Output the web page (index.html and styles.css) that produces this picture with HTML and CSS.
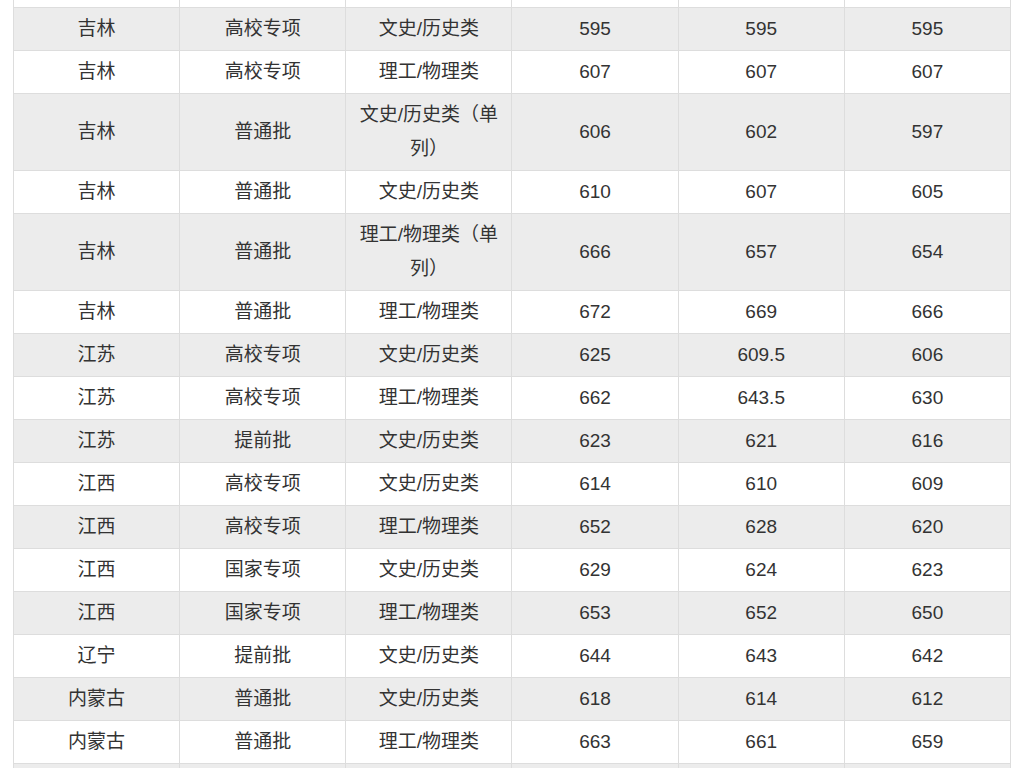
FILE: index.html
```html
<!DOCTYPE html>
<html lang="zh-CN">
<head>
<meta charset="utf-8">
<title>分数线</title>
<link rel="stylesheet" href="styles.css">
</head>
<body>
<div class="page">
<table class="scores">
<tbody>
<tr class="filler"><td></td><td></td><td></td><td></td><td></td><td></td></tr>
<tr><td>吉林</td><td>高校专项</td><td>文史/历史类</td><td>595</td><td>595</td><td>595</td></tr>
<tr><td>吉林</td><td>高校专项</td><td>理工/物理类</td><td>607</td><td>607</td><td>607</td></tr>
<tr><td>吉林</td><td>普通批</td><td>文史/历史类（单列）</td><td>606</td><td>602</td><td>597</td></tr>
<tr><td>吉林</td><td>普通批</td><td>文史/历史类</td><td>610</td><td>607</td><td>605</td></tr>
<tr><td>吉林</td><td>普通批</td><td>理工/物理类（单列）</td><td>666</td><td>657</td><td>654</td></tr>
<tr><td>吉林</td><td>普通批</td><td>理工/物理类</td><td>672</td><td>669</td><td>666</td></tr>
<tr><td>江苏</td><td>高校专项</td><td>文史/历史类</td><td>625</td><td>609.5</td><td>606</td></tr>
<tr><td>江苏</td><td>高校专项</td><td>理工/物理类</td><td>662</td><td>643.5</td><td>630</td></tr>
<tr><td>江苏</td><td>提前批</td><td>文史/历史类</td><td>623</td><td>621</td><td>616</td></tr>
<tr><td>江西</td><td>高校专项</td><td>文史/历史类</td><td>614</td><td>610</td><td>609</td></tr>
<tr><td>江西</td><td>高校专项</td><td>理工/物理类</td><td>652</td><td>628</td><td>620</td></tr>
<tr><td>江西</td><td>国家专项</td><td>文史/历史类</td><td>629</td><td>624</td><td>623</td></tr>
<tr><td>江西</td><td>国家专项</td><td>理工/物理类</td><td>653</td><td>652</td><td>650</td></tr>
<tr><td>辽宁</td><td>提前批</td><td>文史/历史类</td><td>644</td><td>643</td><td>642</td></tr>
<tr><td>内蒙古</td><td>普通批</td><td>文史/历史类</td><td>618</td><td>614</td><td>612</td></tr>
<tr><td>内蒙古</td><td>普通批</td><td>理工/物理类</td><td>663</td><td>661</td><td>659</td></tr>
<tr class="filler"><td></td><td></td><td></td><td></td><td></td><td></td></tr>
</tbody>
</table>
</div>
</body>
</html>
```

FILE: styles.css
```css
html, body {
  margin: 0;
  padding: 0;
  background: #ffffff;
}

body {
  height: 768px;
  overflow: hidden;
}

.page {
  padding-left: 13px;
}

.scores {
  width: 998px;
  margin-top: -36px;
  border-collapse: collapse;
  table-layout: fixed;
  font-family: "Liberation Sans", "Noto Sans CJK SC", sans-serif;
  font-size: 19px;
  color: #333333;
}

.scores td {
  border: 1px solid #dddddd;
  padding: 4px 8px;
  line-height: 34px;
  height: 34px;
  text-align: center;
  vertical-align: middle;
}

.scores tr:nth-child(even) td {
  background: #ececec;
}
```
